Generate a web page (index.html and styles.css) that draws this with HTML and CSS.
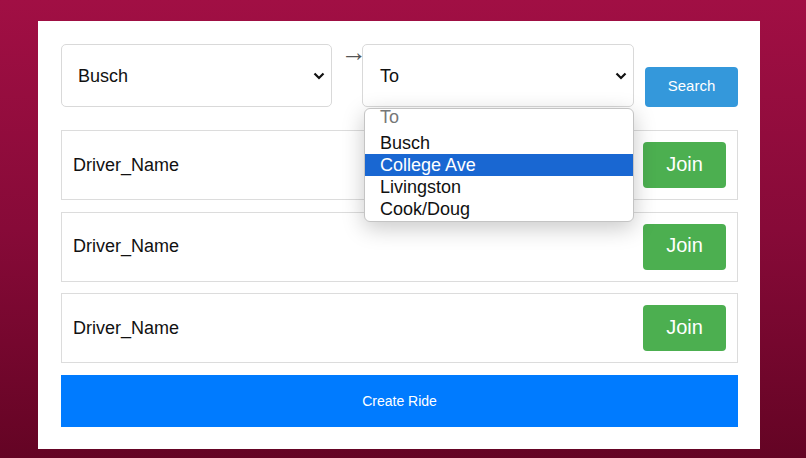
FILE: index.html
```html
<!DOCTYPE html>
<html>
<head>
<meta charset="utf-8">
<link rel="stylesheet" href="styles.css">
</head>
<body>
<div class="card">
  <div class="search-bar">
    <div class="select">
      <span>Busch</span>
      <svg class="chev" width="12" height="8" viewBox="0 0 12 8"><path d="M1.5 1.5 L6 6 L10.5 1.5" fill="none" stroke="#111" stroke-width="2.2"/></svg>
    </div>
    <div class="arrow">→</div>
    <div class="select-wrap">
      <div class="select">
        <span>To</span>
        <svg class="chev" width="12" height="8" viewBox="0 0 12 8"><path d="M1.5 1.5 L6 6 L10.5 1.5" fill="none" stroke="#111" stroke-width="2.2"/></svg>
      </div>
      <div class="dropdown">
        <div class="opt placeholder">To</div>
        <div class="opt">Busch</div>
        <div class="opt active">College Ave</div>
        <div class="opt">Livingston</div>
        <div class="opt">Cook/Doug</div>
      </div>
    </div>
    <button class="search-btn">Search</button>
  </div>
  <div class="ride">
    <span class="driver">Driver_Name</span>
    <button class="join">Join</button>
  </div>
  <div class="ride">
    <span class="driver">Driver_Name</span>
    <button class="join">Join</button>
  </div>
  <div class="ride">
    <span class="driver">Driver_Name</span>
    <button class="join">Join</button>
  </div>
  <button class="create">Create Ride</button>
</div>
</body>
</html>
```
FILE: styles.css
```css
html, body {
  margin: 0;
  padding: 0;
  height: 100%;
}
body {
  background: linear-gradient(180deg, #a10f44 0%, #870a38 50%, #640424 100%);
  font-family: "Liberation Sans", Arial, sans-serif;
  overflow: hidden;
}
.card {
  margin: 21px 0 0 38px;
  width: 722px;
  height: 428px;
  box-sizing: border-box;
  background: #fff;
  padding: 23px 22px 22px 23px;
}
.search-bar {
  display: flex;
  align-items: flex-start;
  margin-bottom: 23px;
}
.select {
  width: 271px;
  height: 63px;
  box-sizing: border-box;
  border: 1px solid #d9d9d9;
  border-radius: 5px;
  display: flex;
  align-items: center;
  justify-content: space-between;
  padding: 1px 6px 0 16px;
  font-size: 18px;
  color: #111;
  background: #fff;
}
.select-wrap {
  position: relative;
}
.select-wrap .select {
  width: 272px;
  padding-left: 17px;
}
.arrow {
  width: 30px;
  text-align: center;
  font-size: 26px;
  color: #555;
  line-height: 16px;
  padding-left: 9px;
  box-sizing: border-box;
}
.dropdown {
  position: absolute;
  left: 2px;
  top: 64px;
  width: 270px;
  box-sizing: border-box;
  background: #fff;
  border: 1px solid #c4c4c4;
  border-radius: 6px;
  box-shadow: 0 6px 22px rgba(0,0,0,0.22);
  padding: 0 0 1px;
  z-index: 5;
  overflow: hidden;
}
.opt {
  height: 22px;
  line-height: 22px;
  font-size: 18px;
  padding-left: 15px;
  color: #111;
}
.opt.placeholder {
  color: #777;
  height: 23px;
  line-height: 17px;
}
.opt.active {
  background: #1967d2;
  color: #fff;
}
.search-btn {
  margin-left: 11px;
  margin-top: 23px;
  width: 93px;
  height: 40px;
  border: none;
  border-radius: 4px;
  background: #3498db;
  color: #fff;
  font-family: inherit;
  font-size: 15px;
  padding: 0 0 3px;
}
.ride {
  height: 70px;
  box-sizing: border-box;
  border: 1px solid #dcdcdc;
  display: flex;
  align-items: center;
  justify-content: space-between;
  padding: 0 11px 0 11px;
  margin-bottom: 11.5px;
}
.driver {
  font-size: 18px;
  color: #111;
}
.join {
  width: 83px;
  height: 46px;
  border: none;
  border-radius: 4px;
  background: #4caf50;
  color: #fff;
  font-family: inherit;
  font-size: 20px;
  padding: 0 0 2px;
}
.create {
  display: block;
  margin-top: 12px;
  width: 100%;
  height: 52px;
  border: none;
  background: #007bff;
  color: #fff;
  font-family: inherit;
  font-size: 14px;
}
```
